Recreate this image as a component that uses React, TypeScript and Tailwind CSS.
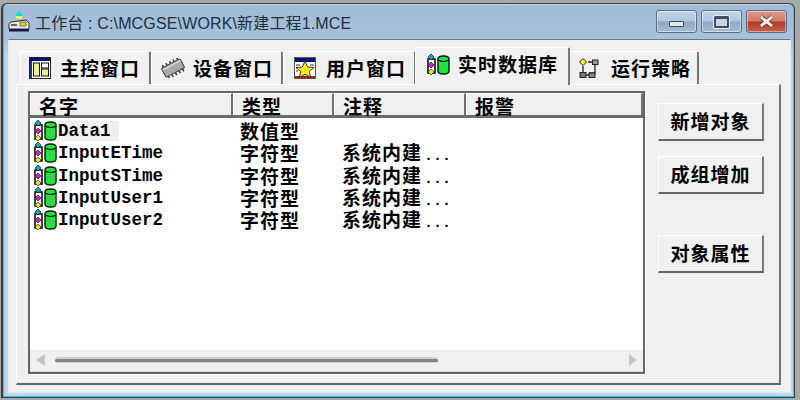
const cjk = "font-['Noto_Sans_CJK_SC','Liberation_Sans',sans-serif]";

function DbIcon({ className = "" }: { className?: string }) {
  return (
    <svg width="24" height="22" viewBox="0 0 24 22" className={className}>
      <rect x="2" y="5" width="7" height="14" fill="#fff" stroke="#111" strokeWidth="1.6" />
      <path d="M5 0 L8 3 L5 6 L2 3 Z" fill="#00a8c8" stroke="#123" strokeWidth="0.7" />
      <path d="M5 8 L8 11 L5 14 L2 11 Z" fill="#d81fb8" stroke="#312" strokeWidth="0.7" />
      <path d="M5 15 L8 18 L5 21 L2 18 Z" fill="#e8e030" stroke="#330" strokeWidth="0.7" />
      <path d="M12 5 Q12 2 17.5 2 Q23 2 23 5 V17 Q23 20 17.5 20 Q12 20 12 17 Z" fill="#18e838" stroke="#111" strokeWidth="1.4" />
      <path d="M12 6 Q17.5 9 23 6" fill="none" stroke="#111" strokeWidth="1.2" />
      <path d="M17.5 10 V15 M15 12.5 H20" stroke="#70a870" strokeWidth="1" />
    </svg>
  );
}

function MainIcon() {
  return (
    <svg width="22" height="22" viewBox="0 0 22 22">
      <rect x="0.5" y="0.5" width="21" height="21" fill="#fff" stroke="#222" />
      <rect x="1" y="1" width="20" height="3" fill="#00107c" />
      <rect x="1" y="4" width="2" height="17" fill="#20308c" />
      <rect x="4.5" y="6" width="6" height="13" fill="#f4ee90" stroke="#111" />
      <rect x="12.5" y="6" width="7" height="5" fill="#fff" stroke="#111" />
      <rect x="12.5" y="12" width="7" height="7" fill="#f4ee90" stroke="#111" />
    </svg>
  );
}

function ChipIcon() {
  return (
    <svg width="24" height="20" viewBox="0 0 24 20">
      <g transform="rotate(-28 12 10)">
        <path d="M4 5 V2.5 M8 5 V2.5 M12 5 V2.5 M16 5 V2.5 M20 5 V2.5 M4 15 V18 M8 15 V18 M12 15 V18 M16 15 V18 M20 15 V18" stroke="#333" strokeWidth="1.5" />
        <rect x="1.5" y="5" width="21" height="10" rx="1" fill="#a8a8a8" stroke="#444" />
        <path d="M2 7 H22" stroke="#d8d8d8" strokeWidth="1.5" />
      </g>
    </svg>
  );
}

function UserIcon() {
  return (
    <svg width="22" height="22" viewBox="0 0 22 22">
      <rect x="0.5" y="0.5" width="21" height="21" fill="#fff" stroke="#555" />
      <rect x="1" y="1" width="20" height="4" fill="#00107c" />
      <path d="M2 8 H6 M2 11 H5 M2 14 H4 M16 8 H20" stroke="#333" strokeWidth="1.2" />
      <rect x="1" y="19" width="20" height="2" fill="#b01818" />
      <path d="M11 4 L13.6 10 L20 10.5 L15.2 14.6 L16.8 20.5 L11 17.2 L5.2 20.5 L6.8 14.6 L2 10.5 L8.4 10 Z" fill="#fff000" stroke="#222" strokeWidth="0.9" />
    </svg>
  );
}

function StrategyIcon() {
  return (
    <svg width="20" height="20" viewBox="0 0 20 20">
      <path d="M4 8 V17 H10 M9 4 H14 M16 6 V15 H10" fill="none" stroke="#222" strokeWidth="1.3" />
      <path d="M4 0.5 L7.5 4 L4 7.5 L0.5 4 Z" fill="#fff020" stroke="#222" />
      <rect x="13.5" y="2" width="5.5" height="4.5" fill="#999" stroke="#222" />
      <rect x="1" y="14.5" width="6" height="5" fill="#777" stroke="#222" />
      <rect x="10" y="15" width="6" height="4.5" fill="#888" stroke="#222" />
    </svg>
  );
}

function AppIcon() {
  return (
    <svg width="22" height="22" viewBox="0 0 22 22">
      <path d="M11 0 L15 5 H7 Z" fill="#10d8e8" />
      <rect x="8" y="5" width="6" height="3" fill="#f0f060" />
      <path d="M3 11 L18 9 L21 12 V18 H1 V13 Z" fill="#e8e8e8" stroke="#333" />
      <rect x="12" y="11" width="6" height="4" fill="#d8d820" stroke="#333" strokeWidth="0.6" />
      <rect x="3" y="13" width="6" height="2" fill="#666" />
      <rect x="1" y="18" width="20" height="2.5" fill="#1a1a40" />
    </svg>
  );
}

function Tab({ icon, label, width, gap, pad, active }: { icon: React.ReactNode; label: string; width: string; gap: string; pad: string; active?: boolean }) {
  return (
    <div
      className={`${width} ${gap} ${pad} flex items-center border-t border-l border-t-white border-l-white border-r-2 border-r-[#777] bg-[#f0f0f0] rounded-t-[2px] ${
        active ? "h-[38px] pb-[4px] -mx-[1px] z-10 -mb-[1px]" : "h-[33px]"
      } text-[19px] tracking-[1px] font-bold text-black whitespace-nowrap`}
    >
      {icon}
      <span>{label}</span>
    </div>
  );
}

function SideButton({ label, className = "" }: { label: string; className?: string }) {
  return (
    <div className={`w-[106px] h-[38px] flex items-center justify-center bg-[#f0f0f0] border-t border-l border-white border-r-2 border-b-2 border-r-[#777] border-b-[#666] text-[19px] font-bold tracking-[1px] text-black ${className}`}>
      {label}
    </div>
  );
}

function WinButton({ kind }: { kind: "min" | "max" | "close" }) {
  const bg =
    kind === "close"
      ? "bg-[linear-gradient(#dd9a8c_0%,#cf7a68_48%,#b23a28_52%,#c4604c_100%)]"
      : "bg-[linear-gradient(#c4d6e8_0%,#b0c6dc_48%,#8ba8c6_52%,#a4bdd6_100%)]";
  return (
    <div className={`w-[41px] h-[23px] flex items-center justify-center rounded-[3px] border border-[#5a6e86] shadow-[inset_0_0_0_1px_rgba(255,255,255,0.45)] ${bg}`}>
      {kind === "min" && <div className="w-[15px] h-[6px] mt-[5px] bg-[#dfe6ee] border border-[#3d4f66] rounded-[1px]" />}
      {kind === "max" && <div className="w-[15px] h-[12px] border-[2px] border-t-[3px] border-[#3d4f66] bg-[#c6d4e4] rounded-[1px] outline outline-1 outline-[#e8eef4]" />}
      {kind === "close" && (
        <svg width="17" height="13" viewBox="0 0 17 13">
          <path d="M3 2 L14 11 M14 2 L3 11" stroke="#5a2a20" strokeWidth="4.6" />
          <path d="M3 2 L14 11 M14 2 L3 11" stroke="#f4f0ee" strokeWidth="3" />
        </svg>
      )}
    </div>
  );
}

const rows = [
  { name: "Data1", type: "数值型", note: "" },
  { name: "InputETime", type: "字符型", note: "系统内建" },
  { name: "InputSTime", type: "字符型", note: "系统内建" },
  { name: "InputUser1", type: "字符型", note: "系统内建" },
  { name: "InputUser2", type: "字符型", note: "系统内建" },
];

const headers = [
  { label: "名字", w: "w-[203px]" },
  { label: "类型", w: "w-[101px]" },
  { label: "注释", w: "w-[132px]" },
  { label: "报警", w: "flex-1" },
];

export default function App() {
  return (
    <div className={`w-[800px] h-[400px] overflow-hidden bg-[#a8a8a8] pt-[3px] pl-[1px] pr-[5px] pb-[2px] ${cjk}`}>
      <div className="h-full rounded-t-[6px] border-2 border-[#3a3f44] border-t border-r border-b shadow-[inset_1px_0_0_#30c0e8,inset_-1px_0_0_#30c0e8,inset_0_-1px_0_#18c8f0,inset_0_1px_0_#c8d8e8] bg-[linear-gradient(180deg,#9ebad6_0%,#a6c2dc_9%,#bcd6f0_14%,#bcd6f0_100%)] flex flex-col pb-[4px]">
        <div className="h-[35px] shrink-0 flex items-center pl-[5px] pr-[7px]">
          <AppIcon />
          <span className="ml-[5px] mt-[5px] text-[16px] tracking-[0.15px] text-[#22303e] font-['Liberation_Sans','Noto_Sans_CJK_SC',sans-serif]">
            工作台 : C:\MCGSE\WORK\新建工程1.MCE
          </span>
          <div className="ml-auto flex gap-[4px]">
            <WinButton kind="min" />
            <WinButton kind="max" />
            <WinButton kind="close" />
          </div>
        </div>
        <div className="flex-1 min-h-0 ml-[5px] mr-[3px] border border-[#e6eaee] border-t-[#6e7880] bg-[#f0f0f0] pl-[7px] pt-[6px]">
          <div className="flex items-end h-[38px] pl-[4px] relative z-10">
            <Tab icon={<MainIcon />} label="主控窗口" width="w-[131px]" gap="gap-[9px]" pad="pl-[8px]" />
            <Tab icon={<ChipIcon />} label="设备窗口" width="w-[132px]" gap="gap-[8px]" pad="pl-[9px]" />
            <Tab icon={<UserIcon />} label="用户窗口" width="w-[133px]" gap="gap-[10px]" pad="pl-[10px]" />
            <Tab icon={<DbIcon />} label="实时数据库" width="w-[155px]" gap="gap-[8px]" pad="pl-[10px]" active />
            <Tab icon={<StrategyIcon />} label="运行策略" width="w-[130px]" gap="gap-[12px]" pad="pl-[9px]" />
          </div>
          <div className="w-[765px] h-[301px] flex border-t border-l border-white border-r-2 border-b-2 border-r-[#777] border-b-[#666] pl-[11px] pt-[6px]">
            <div className="w-[617px] h-[283px] flex flex-col border-2 border-[#666] shadow-[1px_1px_0_#fff] bg-white">
              <div className="h-[25px] shrink-0 flex bg-[#f0f0f0] border-b-[3px] border-[#6a6a6a] text-[19px] leading-[20px] font-bold text-black">
                {headers.map((h) => (
                  <div key={h.label} className={`${h.w} h-[22px] pl-[8px] pt-[2px] border-l border-t border-white border-r-2 border-r-[#707070] whitespace-nowrap tracking-[1px]`}>
                    {h.label}
                  </div>
                ))}
              </div>
              <div className="flex-1 pt-[2px]">
                {rows.map((r, i) => (
                  <div key={r.name} className="h-[22.25px] flex items-center pl-[3px]">
                    <div className="w-[207px] flex items-center">
                      <DbIcon className="shrink-0" />
                      <span className={`ml-[1px] pr-[8px] h-[20px] leading-[20px] text-[17.5px] font-bold text-black font-['Liberation_Mono',monospace] ${i === 0 ? "w-[61px] bg-[#f0f0f0]" : ""}`}>
                        {r.name}
                      </span>
                    </div>
                    <div className="w-[102px] text-[19px] font-bold tracking-[1px] leading-[20px]">{r.type}</div>
                    <div className="text-[19px] font-bold tracking-[1px] leading-[20px] whitespace-nowrap">
                      {r.note}
                      {r.note && <span className="ml-[2px] text-[15px] leading-none font-['Liberation_Mono',monospace] tracking-[0px]">...</span>}
                    </div>
                  </div>
                ))}
              </div>
              <div className="h-[22px] shrink-0 bg-[#f0f0f0] border-b border-[#dcdcdc] flex items-center pl-[6px] pr-[6px] pb-[1px]">
                <div className="w-0 h-0 border-y-[6px] border-y-transparent border-r-[9px] border-r-[#c8c8c8]" />
                <div className="ml-[10px] w-[383px] h-[6px] rounded-full bg-[#cfcfcf] flex items-center">
                  <div className="w-full h-[3px] bg-[#858585] rounded-full" />
                </div>
                <div className="ml-auto w-0 h-0 border-y-[6px] border-y-transparent border-l-[8px] border-l-[#c8c8c8]" />
              </div>
            </div>
            <div className="ml-[13px] flex flex-col">
              <SideButton label="新增对象" className="mt-[12px]" />
              <SideButton label="成组增加" className="mt-[15px]" />
              <SideButton label="对象属性" className="mt-[41px]" />
            </div>
          </div>
        </div>
      </div>
    </div>
  );
}
